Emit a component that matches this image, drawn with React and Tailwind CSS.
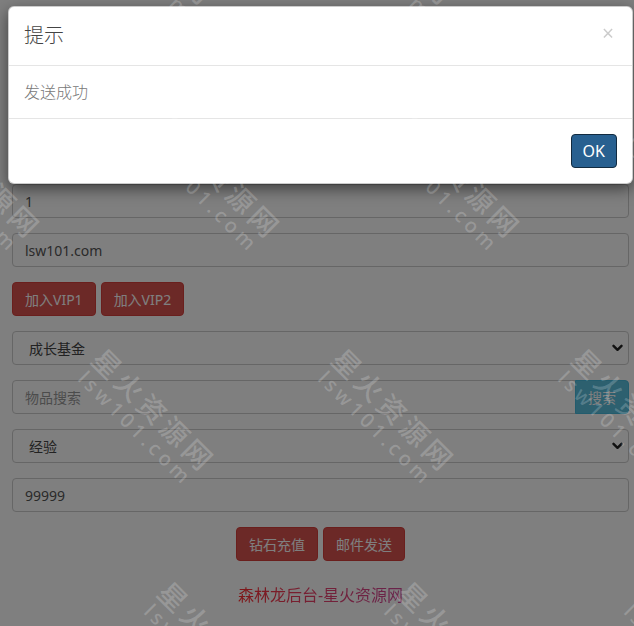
import { useState } from 'react'

const marks = [
  [146, -48], [386, -48], [626, -48],
  [-28, 185], [212, 185], [452, 185], [692, 185],
  [146, 418], [386, 418], [626, 418],
  [-28, 651], [212, 651], [452, 651], [692, 651],
]

const inputCls =
  'h-[34px] w-full rounded-[4px] border border-[#ccc] bg-white px-3 text-[14px] text-[#555] outline-none placeholder:text-[#999]'

const btnDanger =
  'h-[34px] rounded-[4px] border border-[#d43f3a] bg-[#d9534f] px-3 text-[14px] text-white'

const Chevron = () => (
  <svg className="pointer-events-none absolute right-[6px] top-1/2 h-[8px] w-[11px] -translate-y-1/2" viewBox="0 0 11 8" fill="none">
    <path d="M1.5 1.8 5.5 5.8 9.5 1.8" stroke="#222" strokeWidth="2.4" strokeLinecap="round" strokeLinejoin="round" />
  </svg>
)

const Select = ({ options }) => (
  <div className="relative">
    <select className="h-[34px] w-full appearance-none rounded-[4px] border border-[#ccc] bg-white pl-4 pr-6 text-[14px] text-[#444] outline-none">
      {options.map((o) => (
        <option key={o}>{o}</option>
      ))}
    </select>
    <Chevron />
  </div>
)

export default function App() {
  const [open, setOpen] = useState(true)

  return (
    <div className="relative h-[626px] w-full overflow-hidden bg-white font-['Noto_Sans','Noto_Sans_CJK_SC',sans-serif]">
      {/* form */}
      <div className="flex flex-col gap-[15px] pl-3 pr-[5px] pt-[37px]">
        <input className={inputCls} placeholder="服务器" defaultValue="1" />
        <input className={inputCls} placeholder="账号" defaultValue="1" />
        <input className={inputCls} placeholder="角色" defaultValue="1" />
        <input className={inputCls} placeholder="数量" defaultValue="1" />
        <input className={inputCls} placeholder="账号" defaultValue="lsw101.com" />
        <div className="flex gap-[5px]">
          <button className={btnDanger}>加入VIP1</button>
          <button className={btnDanger}>加入VIP2</button>
        </div>
        <Select options={['成长基金', '月卡', '至尊卡']} />
        <div className="flex">
          <input
            className="h-[34px] min-w-0 flex-1 rounded-l-[4px] border border-[#ccc] bg-white px-3 text-[14px] text-[#555] outline-none placeholder:text-[#999]"
            placeholder="物品搜索"
          />
          <button className="-ml-px h-[34px] rounded-r-[4px] border border-[#46b8da] bg-[#5bc0de] px-3 text-[14px] text-white">
            搜索
          </button>
        </div>
        <Select options={['经验', '金币', '钻石']} />
        <input className={inputCls} placeholder="数量" defaultValue="99999" />
        <div className="flex justify-center gap-[5px]">
          <button className={btnDanger}>钻石充值</button>
          <button className={btnDanger}>邮件发送</button>
        </div>
        <div className="mt-[8px] text-center text-[16px] leading-[22px]">
          <span className="bg-gradient-to-r from-[#ff2d2d] to-[#d2489a] bg-clip-text text-transparent">
            森林龙后台-星火资源网
          </span>
        </div>
      </div>

      {open && (
        <>
          {/* backdrop */}
          <div className="absolute inset-0 bg-black/50" />

          {/* modal */}
          <div className="absolute left-[8px] right-[1px] top-[6px] rounded-[6px] border border-black/20 bg-white shadow-[0_5px_15px_rgba(0,0,0,0.5)]">
            <div className="flex items-center justify-between border-b border-[#e5e5e5] p-[15px]">
              <h4 className="text-[20px] font-light leading-[28px] text-[#444]">提示</h4>
              <button
                onClick={() => setOpen(false)}
                className="-mt-[6px] mr-[3px] text-[21px] leading-none text-black opacity-20"
                aria-label="Close"
              >
                ×
              </button>
            </div>
            <div className="border-b border-[#e5e5e5] p-[15px] text-[16px] font-light leading-[22px] text-[#777]">发送成功</div>
            <div className="flex justify-end p-[15px]">
              <button
                onClick={() => setOpen(false)}
                className="h-[34px] rounded-[4px] border border-[#122b40] bg-[#286090] px-[11px] text-[16px] text-white"
              >
                OK
              </button>
            </div>
          </div>
        </>
      )}

      {/* watermark */}
      {marks.map(([x, y], i) => (
        <div
          key={i}
          className="pointer-events-none absolute flex -translate-x-1/2 -translate-y-1/2 rotate-45 flex-col items-center whitespace-nowrap font-medium text-white/20"
          style={{ left: x, top: y }}
        >
          <span className="text-[28px] leading-[30px] tracking-[4px]">星火资源网</span>
          <span className="text-[20px] leading-[22px] tracking-[4px]">lsw101.com</span>
        </div>
      ))}
    </div>
  )
}
